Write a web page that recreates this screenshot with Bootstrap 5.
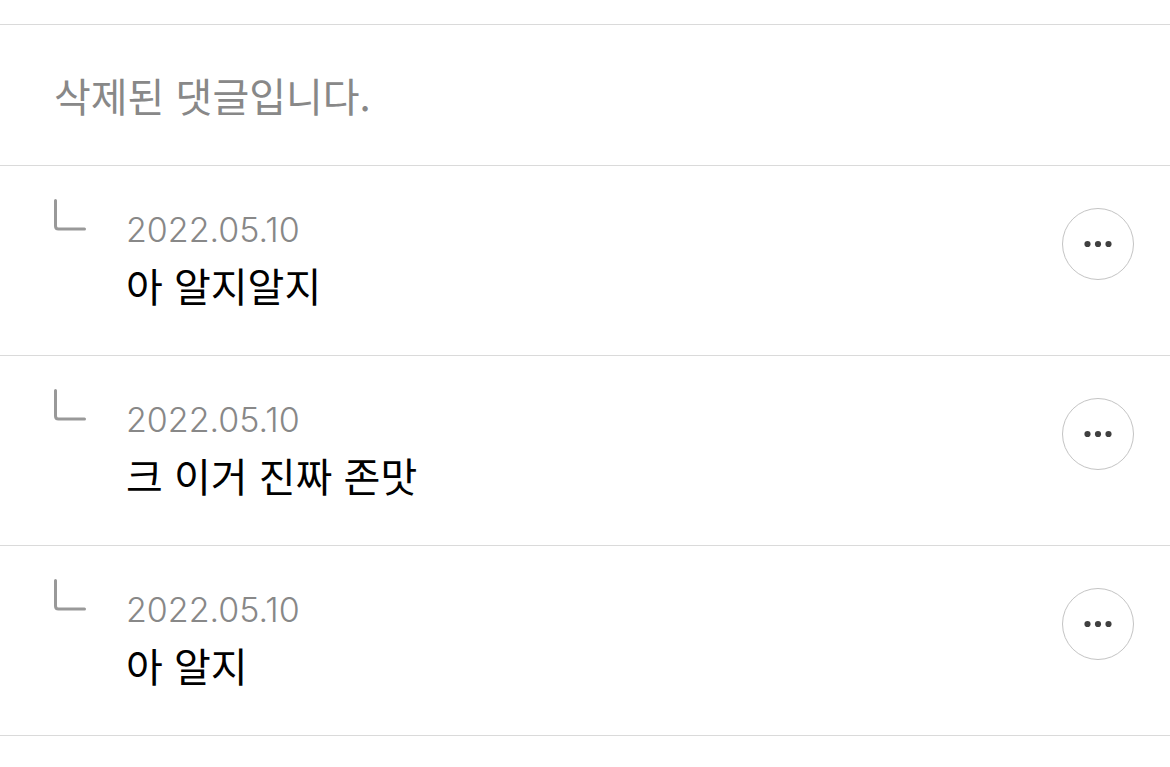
<!DOCTYPE html>
<html lang="ko">
<head>
<meta charset="utf-8">
<meta name="viewport" content="width=device-width, initial-scale=1">
<title>댓글</title>
<link href="https://cdn.jsdelivr.net/npm/bootstrap@5.3.0/dist/css/bootstrap.min.css" rel="stylesheet">
<style>
body { font-family: Inter, "Noto Sans CJK KR", sans-serif; background: #fff; color: #000; }
.comments { margin-top: 24px; border-top: 1px solid #dadada; }
.comment { border-bottom: 1px solid #dadada; }
.deleted { padding: 40px 54px; }
.reply { padding: 33px 36px 40px 54px; }
.msg { font-family: "Noto Sans CJK KR", sans-serif; font-size: 40px; line-height: 60px; }
.deleted .msg { color: #888; }
.date { display: block; margin-bottom: 5px; font-size: 34px; line-height: 40px; font-weight: 300; color: #888; }
.reply-body { margin: 11px 0 0 40px; }
.more { width: 72px; height: 72px; margin-top: 9px; border: 1px solid #c4c4c4; background: #fff; }
</style>
</head>
<body>
<main>
<ul class="comments list-unstyled mb-0">
<li class="comment deleted"><p class="msg mb-0">삭제된 댓글입니다.</p></li>
<li class="comment reply d-flex align-items-start">
<svg class="flex-shrink-0" width="32" height="32" fill="none" stroke="#999" stroke-width="3" stroke-linecap="round" aria-hidden="true"><path d="M1.5 1.5V27Q1.5 30 4.500 30H30.500"/></svg>
<div class="reply-body flex-grow-1"><time class="date" datetime="2022-05-10">2022.05.10</time><p class="msg mb-0">아 알지알지</p></div>
<button type="button" class="more rounded-circle p-0 d-flex align-items-center justify-content-center flex-shrink-0" aria-label="더보기"><svg width="28" height="8" fill="#404040"><circle cx="3.500" cy="4" r="3.100"/><circle cx="14" cy="4" r="3.100"/><circle cx="24.500" cy="4" r="3.100"/></svg></button>
</li>
<li class="comment reply d-flex align-items-start">
<svg class="flex-shrink-0" width="32" height="32" fill="none" stroke="#999" stroke-width="3" stroke-linecap="round" aria-hidden="true"><path d="M1.5 1.5V27Q1.5 30 4.500 30H30.500"/></svg>
<div class="reply-body flex-grow-1"><time class="date" datetime="2022-05-10">2022.05.10</time><p class="msg mb-0">크 이거 진짜 존맛</p></div>
<button type="button" class="more rounded-circle p-0 d-flex align-items-center justify-content-center flex-shrink-0" aria-label="더보기"><svg width="28" height="8" fill="#404040"><circle cx="3.500" cy="4" r="3.100"/><circle cx="14" cy="4" r="3.100"/><circle cx="24.500" cy="4" r="3.100"/></svg></button>
</li>
<li class="comment reply d-flex align-items-start">
<svg class="flex-shrink-0" width="32" height="32" fill="none" stroke="#999" stroke-width="3" stroke-linecap="round" aria-hidden="true"><path d="M1.5 1.5V27Q1.5 30 4.500 30H30.500"/></svg>
<div class="reply-body flex-grow-1"><time class="date" datetime="2022-05-10">2022.05.10</time><p class="msg mb-0">아 알지</p></div>
<button type="button" class="more rounded-circle p-0 d-flex align-items-center justify-content-center flex-shrink-0" aria-label="더보기"><svg width="28" height="8" fill="#404040"><circle cx="3.500" cy="4" r="3.100"/><circle cx="14" cy="4" r="3.100"/><circle cx="24.500" cy="4" r="3.100"/></svg></button>
</li>
</ul>
</main>
<script src="https://cdn.jsdelivr.net/npm/bootstrap@5.3.0/dist/js/bootstrap.bundle.min.js"></script>
</body>
</html>
